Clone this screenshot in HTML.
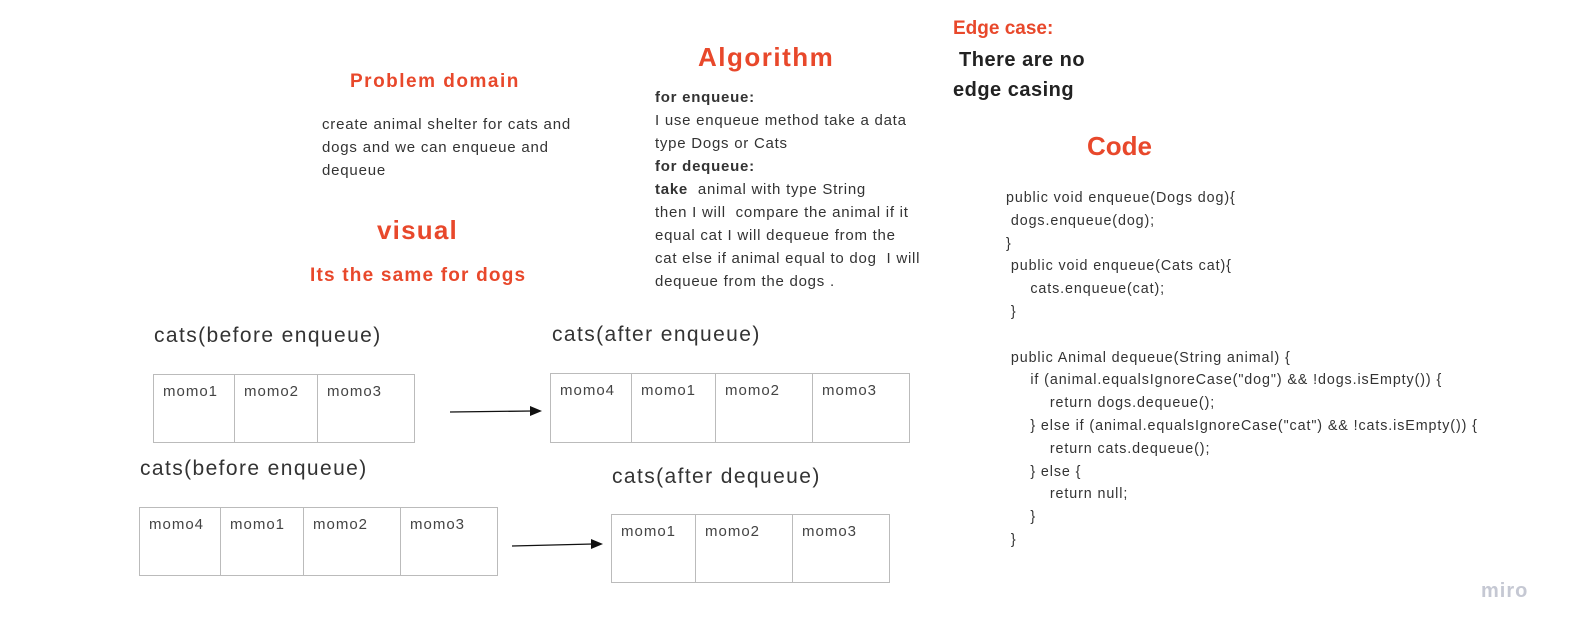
<!DOCTYPE html>
<html><head><meta charset="utf-8"><style>
*{margin:0;padding:0;box-sizing:border-box}
body{width:1569px;height:637px;background:#fff;position:relative;overflow:hidden;font-family:"Liberation Sans",sans-serif;color:#333}
.a{position:absolute;white-space:nowrap}
.h{color:#e8482b;font-weight:bold}
.t{font-size:15px;line-height:23px;letter-spacing:0.75px}
.code{font-size:14.3px;line-height:22.8px;color:#333;letter-spacing:0.9px}
.lbl{font-size:21px;color:#333;letter-spacing:1.4px}
.box{position:absolute;border:1.5px solid #bbb;display:flex}
.box div{border-right:1.5px solid #bbb;padding:8px 0 0 9px;font-size:15px;color:#444;letter-spacing:1px}
.box div:last-child{border-right:none}
</style></head><body>
<div class="a h" style="left:350px;top:71px;font-size:19px;letter-spacing:1.5px">Problem domain</div>
<div class="a t" style="left:322px;top:113px;letter-spacing:0.8px">create animal shelter for cats and<br>dogs and we can enqueue and<br>dequeue</div>
<div class="a h" style="left:377px;top:215px;font-size:26px;letter-spacing:1.2px">visual</div>
<div class="a h" style="left:310px;top:265px;font-size:19px;letter-spacing:1.2px">Its the same for dogs</div>

<div class="a h" style="left:698px;top:42px;font-size:26px;letter-spacing:1.5px">Algorithm</div>
<div class="a t" style="left:655px;top:86px"><b>for enqueue:</b><br>I use enqueue method take a data<br>type Dogs or Cats<br><b>for dequeue:</b><br><b>take</b>&nbsp; animal with type String<br>then I will&nbsp; compare the animal if it<br>equal cat I will dequeue from the<br>cat else if animal equal to dog&nbsp; I will<br>dequeue from the dogs .</div>

<div class="a h" style="left:953px;top:18px;font-size:19px">Edge case:</div>
<div class="a" style="left:953px;top:45px;font-size:20px;line-height:30px;font-weight:bold;color:#222;letter-spacing:0.5px">&nbsp;There are no<br>edge casing</div>
<div class="a h" style="left:1087px;top:131px;font-size:26px">Code</div>
<div class="a code" style="left:1006px;top:187px">public void enqueue(Dogs dog){<br>&nbsp;dogs.enqueue(dog);<br>}<br>&nbsp;public void enqueue(Cats cat){<br>&nbsp;&nbsp;&nbsp;&nbsp;&nbsp;cats.enqueue(cat);<br>&nbsp;}<br><br>&nbsp;public Animal dequeue(String animal) {<br>&nbsp;&nbsp;&nbsp;&nbsp;&nbsp;if (animal.equalsIgnoreCase("dog") &amp;&amp; !dogs.isEmpty()) {<br>&nbsp;&nbsp;&nbsp;&nbsp;&nbsp;&nbsp;&nbsp;&nbsp;&nbsp;return dogs.dequeue();<br>&nbsp;&nbsp;&nbsp;&nbsp;&nbsp;} else if (animal.equalsIgnoreCase("cat") &amp;&amp; !cats.isEmpty()) {<br>&nbsp;&nbsp;&nbsp;&nbsp;&nbsp;&nbsp;&nbsp;&nbsp;&nbsp;return cats.dequeue();<br>&nbsp;&nbsp;&nbsp;&nbsp;&nbsp;} else {<br>&nbsp;&nbsp;&nbsp;&nbsp;&nbsp;&nbsp;&nbsp;&nbsp;&nbsp;return null;<br>&nbsp;&nbsp;&nbsp;&nbsp;&nbsp;}<br>&nbsp;}</div>

<div class="a lbl" style="left:154px;top:324px">cats(before enqueue)</div>
<div class="a lbl" style="left:552px;top:323px">cats(after enqueue)</div>
<div class="a lbl" style="left:140px;top:457px">cats(before enqueue)</div>
<div class="a lbl" style="left:612px;top:465px">cats(after dequeue)</div>

<div class="box" style="left:153px;top:374px;width:262px;height:69px"><div style="width:81px">momo1</div><div style="width:83px">momo2</div><div style="flex:1">momo3</div></div>
<div class="box" style="left:550px;top:373px;width:360px;height:70px"><div style="width:81px">momo4</div><div style="width:84px">momo1</div><div style="width:97px">momo2</div><div style="flex:1">momo3</div></div>
<div class="box" style="left:139px;top:507px;width:359px;height:69px"><div style="width:81px">momo4</div><div style="width:83px">momo1</div><div style="width:97px">momo2</div><div style="flex:1">momo3</div></div>
<div class="box" style="left:611px;top:514px;width:279px;height:69px"><div style="width:84px">momo1</div><div style="width:97px">momo2</div><div style="flex:1">momo3</div></div>

<svg class="a" style="left:0;top:0" width="1569" height="637">
<line x1="450" y1="412" x2="532" y2="411" stroke="#111" stroke-width="1.3"/>
<polygon points="542,411 530,406 530,416" fill="#111"/>
<line x1="512" y1="546" x2="593" y2="544" stroke="#111" stroke-width="1.3"/>
<polygon points="603,544 591,539 591,549" fill="#111"/>
</svg>
<div class="a" style="left:1481px;top:580px;font-size:20px;font-weight:bold;color:#c5c8d3;letter-spacing:1px">miro</div>
</body></html>
